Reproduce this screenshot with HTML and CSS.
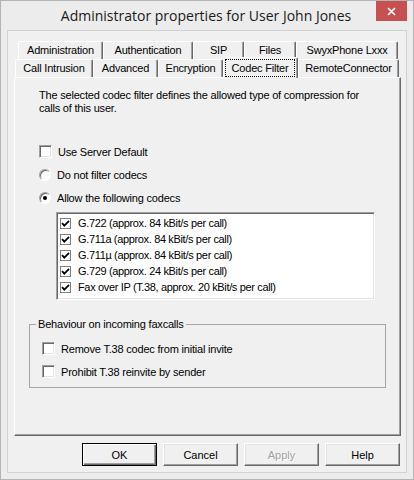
FILE: index.html
```html
<!DOCTYPE html>
<html lang="en">
<head>
  <meta charset="UTF-8">
  <meta name="viewport" content="width=device-width, initial-scale=1.0">
  <title>Administrator properties for User John Jones</title>
  <link rel="stylesheet" href="styles.css">
</head>
<body>
  <div class="window">
    <div class="titlebar">
      <span class="title">Administrator properties for User John Jones</span>
      <button class="close" aria-label="Close">
        <svg width="9" height="9" viewBox="0 0 9 9">
          <path d="M1 1l7 7M8 1l-7 7" stroke="#fff" stroke-width="1.7"></path>
        </svg>
      </button>
    </div>

    <div class="client">
      <div class="tabs">
        <div class="tab-row back">
          <div class="tab tab-admin">Administration</div>
          <div class="tab tab-auth">Authentication</div>
          <div class="tab tab-sip">SIP</div>
          <div class="tab tab-files">Files</div>
          <div class="tab tab-swyx">SwyxPhone Lxxx</div>
        </div>
        <div class="tab-row front">
          <div class="tab tab-intrusion">Call Intrusion</div>
          <div class="tab tab-advanced">Advanced</div>
          <div class="tab tab-encryption">Encryption</div>
          <div class="tab tab-codec selected"><span class="focus">Codec Filter</span></div>
          <div class="tab tab-remote">RemoteConnector</div>
        </div>
      </div>

      <div class="panel">
        <p class="intro">The selected codec filter defines the allowed type of compression for calls of this user.</p>

        <div class="options">
          <label class="opt"><span class="box"></span>Use Server Default</label>
          <label class="opt"><span class="radio"></span>Do not filter codecs</label>
          <label class="opt"><span class="radio"><span class="dot"></span></span>Allow the following codecs</label>
        </div>

        <ul class="codec-list">
          <li><span class="box small"><svg width="9" height="9" viewBox="0 0 9 9"><path d="M1 4.2l2.3 2.4L8 1.8" fill="none" stroke="#000" stroke-width="1.8"></path></svg></span>G.722 (approx. 84 kBit/s per call)</li>
          <li><span class="box small"><svg width="9" height="9" viewBox="0 0 9 9"><path d="M1 4.2l2.3 2.4L8 1.8" fill="none" stroke="#000" stroke-width="1.8"></path></svg></span>G.711a (approx. 84 kBit/s per call)</li>
          <li><span class="box small"><svg width="9" height="9" viewBox="0 0 9 9"><path d="M1 4.2l2.3 2.4L8 1.8" fill="none" stroke="#000" stroke-width="1.8"></path></svg></span>G.711µ (approx. 84 kBit/s per call)</li>
          <li><span class="box small"><svg width="9" height="9" viewBox="0 0 9 9"><path d="M1 4.2l2.3 2.4L8 1.8" fill="none" stroke="#000" stroke-width="1.8"></path></svg></span>G.729 (approx. 24 kBit/s per call)</li>
          <li><span class="box small"><svg width="9" height="9" viewBox="0 0 9 9"><path d="M1 4.2l2.3 2.4L8 1.8" fill="none" stroke="#000" stroke-width="1.8"></path></svg></span>Fax over IP (T.38, approx. 20 kBit/s per call)</li>
        </ul>

        <fieldset class="group">
          <legend>Behaviour on incoming faxcalls</legend>
          <label class="opt"><span class="box"></span>Remove T.38 codec from initial invite</label>
          <label class="opt"><span class="box"></span>Prohibit T.38 reinvite by sender</label>
        </fieldset>
      </div>

      <div class="buttons">
        <button class="btn default">OK</button>
        <button class="btn">Cancel</button>
        <button class="btn" disabled>Apply</button>
        <button class="btn">Help</button>
      </div>
    </div>
  </div>
</body>
</html>
```

FILE: styles.css
```css
body {
  margin: 0;
  padding: 0;
  background-color: #ffffff;
  font-family: 'Liberation Sans', Arial, sans-serif;
  font-size: 11px;
  color: #000000;
}

.window {
  width: 414px;
  height: 480px;
  box-sizing: border-box;
  border: 1px solid #b4b4b4;
  background-color: #ececec;
  display: flex;
  flex-direction: column;
}

/* caption */
.titlebar {
  position: relative;
  height: 29px;
  flex-shrink: 0;
  text-align: center;
}

.title {
  display: block;
  font-family: 'Open Sans', 'Noto Sans', sans-serif;
  font-size: 14px;
  line-height: 29px;
  color: #1a1a1a;
  padding-right: 2px;
}

.close {
  position: absolute;
  top: 0;
  right: 6px;
  width: 31px;
  height: 20px;
  border: none;
  padding: 0;
  background-color: #c75050;
  display: flex;
  align-items: center;
  justify-content: center;
}

/* dialog body */
.client {
  flex: 1;
  margin: 0 6px 6px;
  border: 1px solid #d2d2d2;
  background-color: #f0f0f0;
  padding: 10px 5px 6px 6px;
  display: flex;
  flex-direction: column;
}

.tabs {
  flex-shrink: 0;
}

.tab-row {
  display: flex;
  height: 18px;
}

.tab-row.back {
  margin-left: 4px;
}

.tab-row.front {
  margin-left: 1px;
}

.tab {
  box-sizing: border-box;
  height: 18px;
  border-top: 1px solid #ffffff;
  border-left: 1px solid #ffffff;
  border-right: 1px solid #696969;
  border-radius: 2px 2px 0 0;
  box-shadow: inset -1px 0 #a0a0a0;
  background-color: #f0f0f0;
  text-align: center;
  line-height: 17px;
  letter-spacing: -0.2px;
  white-space: nowrap;
}

.tab-admin { width: 85px; }
.tab-auth { width: 90px; }
.tab-sip { width: 51px; }
.tab-files { width: 52px; }
.tab-swyx { width: 102px; }
.tab-intrusion { width: 78px; }
.tab-advanced { width: 65px; }
.tab-encryption { width: 65px; }
.tab-codec { width: 75px; }
.tab-remote { width: 101px; }

.tab.selected {
  position: relative;
  z-index: 1;
  height: 21px;
  margin-top: -2px;
  margin-bottom: -1px;
  padding: 1px 2px 1px 1px;
}

.focus {
  display: block;
  height: 100%;
  box-sizing: border-box;
  border: 1px dotted #000000;
  line-height: 16px;
}

/* tab page */
.panel {
  flex: 1;
  border-top: 1px solid #ffffff;
  border-left: 1px solid #ffffff;
  border-right: 1px solid #696969;
  border-bottom: 1px solid #696969;
  box-shadow: inset -1px -1px #a0a0a0;
  padding: 0 14px;
  letter-spacing: -0.2px;
}

.intro {
  margin: 11px 10px 0;
  line-height: 13px;
}

.options {
  margin-top: 25px;
  padding-left: 10px;
}

.opt {
  display: flex;
  align-items: center;
  gap: 6px;
  height: 23px;
}

.box {
  width: 13px;
  height: 13px;
  box-sizing: border-box;
  flex-shrink: 0;
  background-color: #ffffff;
  border: 1px solid;
  border-color: #a0a0a0 #ffffff #ffffff #a0a0a0;
  box-shadow: inset 1px 1px #696969, inset -1px -1px #e3e3e3;
  display: flex;
  align-items: center;
  justify-content: center;
}

.box.small {
  width: 11px;
  height: 11px;
  border-color: #808080;
  box-shadow: none;
}

.radio {
  width: 12px;
  height: 12px;
  box-sizing: border-box;
  flex-shrink: 0;
  border-radius: 50%;
  background-color: #ffffff;
  border: 1px solid;
  border-color: #a0a0a0 #ffffff #ffffff #a0a0a0;
  box-shadow: inset 1px 1px #696969;
  display: flex;
  align-items: center;
  justify-content: center;
}

.dot {
  width: 4px;
  height: 4px;
  border-radius: 50%;
  background-color: #000000;
}

.codec-list {
  list-style: none;
  margin: 3px 0 0 27px;
  padding: 2px 0 0 3px;
  width: 319px;
  height: 88px;
  box-sizing: border-box;
  background-color: #ffffff;
  border: 1px solid;
  border-color: #a0a0a0 #ffffff #ffffff #a0a0a0;
  box-shadow: inset 1px 1px #696969, inset -1px -1px #e3e3e3;
}

.codec-list li {
  display: flex;
  align-items: center;
  gap: 7px;
  height: 16px;
  letter-spacing: -0.35px;
}

.group {
  margin: 18px 0 0;
  padding: 6px 6px 4px 6px;
  border: 1px solid #a5a5a5;
  min-width: 0;
}

.group legend {
  padding: 0 2px;
  line-height: 13px;
}

.group .opt {
  padding-left: 6px;
}

/* dialog buttons */
.buttons {
  display: flex;
  justify-content: flex-end;
  gap: 6px;
  margin-top: 7px;
  padding-right: 1px;
  flex-shrink: 0;
}

.btn {
  width: 75px;
  height: 23px;
  padding: 0;
  font-family: 'Liberation Sans', Arial, sans-serif;
  font-size: 11px;
  color: #000000;
  background-color: #f0f0f0;
  border: 1px solid;
  border-color: #ffffff #696969 #696969 #ffffff;
  box-shadow: inset -1px -1px #a0a0a0, inset 1px 1px #e3e3e3;
}

.btn.default {
  border-color: #000000;
  box-shadow: inset 1px 1px #ffffff, inset -1px -1px #696969, inset -2px -2px #a0a0a0;
}

.btn:disabled {
  color: #a0a0a0;
  text-shadow: 1px 1px #ffffff;
}
```
